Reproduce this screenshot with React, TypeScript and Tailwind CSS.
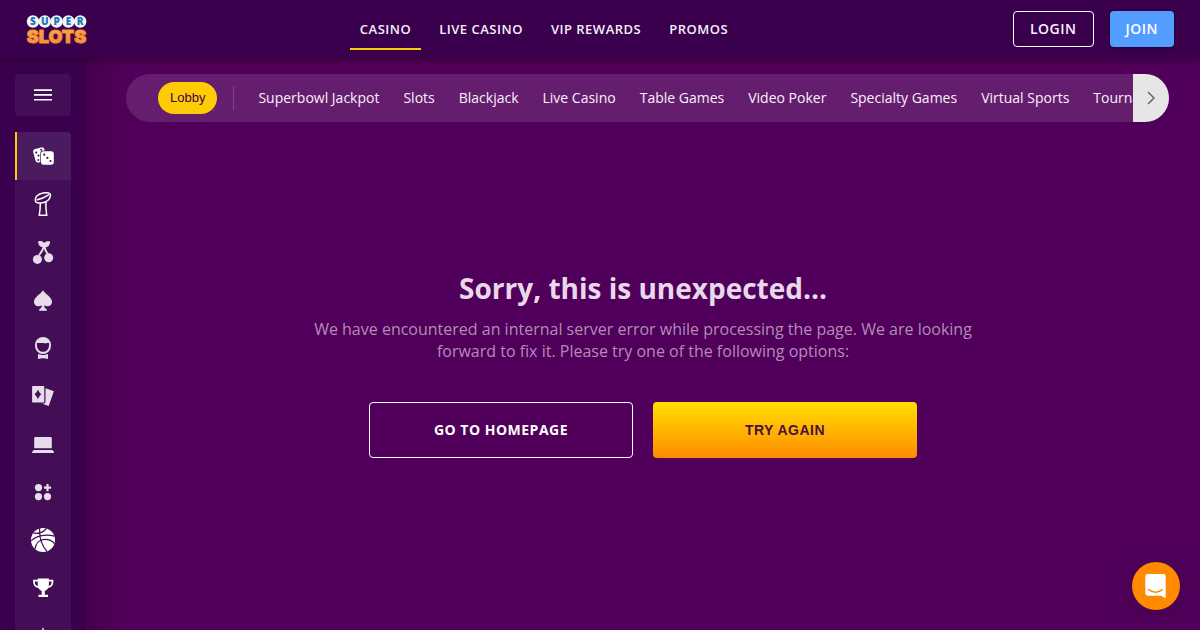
import type { ReactNode } from 'react';

const BG = '#430e55';

function Icon({ children }: { children: ReactNode }) {
  return (
    <svg viewBox="0 0 24 24" className="size-6" fill="currentColor" aria-hidden="true">
      {children}
    </svg>
  );
}

type SideItem = { label: string; icon: ReactNode; tone: string };

const sideItems: SideItem[] = [
  {
    label: 'Lobby',
    tone: 'text-white',
    icon: (
      <>
        <rect x="3.200" y="4" width="11.500" height="13.800" rx="2.600" transform="rotate(-15 9 11)" />
        <rect x="9.300" y="6.500" width="14" height="15" rx="3" fill="#4a1b5e" />
        <rect x="10" y="7.300" width="12.800" height="13.400" rx="2.600" />
        <g fill="#4a1b5e">
          <circle cx="5.200" cy="8.600" r="1.100" />
          <circle cx="10.200" cy="5.700" r="1" />
          <circle cx="7.500" cy="11.600" r="1.100" />
          <circle cx="7.300" cy="15.900" r="1" />
          <circle cx="13.200" cy="10.700" r="1.100" />
          <circle cx="16.400" cy="13.900" r="1.100" />
          <circle cx="19.500" cy="17" r="1.100" />
        </g>
      </>
    ),
  },
  {
    label: 'Superbowl Jackpot',
    tone: 'text-white',
    icon: (
      <g fill="none" stroke="currentColor" strokeWidth="1.5">
        <path d="M4.500 9.300C3.400 5.400 7.200 1.500 12.200 .9c3.600-.4 6.800-.2 7.200 1.600.5 4-3.400 7.800-8.100 8.300-3.200.4-6.200.300-6.800-1.500Z" />
        <path d="M5.600 7.900c4.200-.8 9-2.900 12.400-5.200" />
        <path d="M9.300 10.900c.1 4.500-.4 8.400-1 12.300h7.400c-.6-4-1-8.200-.8-13.400" />
      </g>
    ),
  },
  {
    label: 'Slots',
    tone: 'text-[#e7dce9]',
    icon: (
      <>
        <circle cx="6.400" cy="19.400" r="4.500" />
        <circle cx="17.700" cy="17.800" r="4.500" />
        <path d="M7.200 1.300c2.400-.5 4.700-.2 5.900 1.600 1.200-1.600 3.300-2 5.900-1.600.2 4.300-2.300 6.400-5.900 6.200-3.600.1-6-1.900-5.900-6.200Z" />
        <path d="M12.800 6.500c-.8 3.600-2.700 6-5 9M13.400 6.500c.5 2.900 1.400 5 3.600 8" fill="none" stroke="currentColor" strokeWidth="1.900" />
      </>
    ),
  },
  {
    label: 'Blackjack',
    tone: 'text-[#e7dce9]',
    icon: (
      <path d="M12 2.200c1.900 3.700 9 6.500 9 11.600 0 4.500-5.200 5.700-7.800 3.400.1 1.900.5 3.100 2.600 4.100v1.500H8.200v-1.500c2.100-1 2.500-2.200 2.600-4.100C8.200 19.500 3 18.300 3 13.800 3 8.700 10.100 5.900 12 2.200Z" />
    ),
  },
  {
    label: 'Live Casino',
    tone: 'text-[#e7dce9]',
    icon: (
      <>
        <path
          fillRule="evenodd"
          d="M12 .9a8.100 8.400 0 0 1 8.100 8.400 8.100 8.700 0 0 1-16.200 0A8.100 8.400 0 0 1 12 .9ZM5.900 7v2.300a6.100 6.500 0 0 0 12.200 0V7h-2.900l-1.100.8-.8-.8H5.900Z"
        />
        <path d="M7 18 11 19h2l4-1v5L13 22.200h-2L7 23v-5Z" />
      </>
    ),
  },
  {
    label: 'Table Games',
    tone: 'text-[#e7dce9]',
    icon: (
      <>
        <path d="M14 3.900 22.900 7.300 17.700 21.900 10 19.300Z" />
        <rect x=".5" y="1.500" width="13.400" height="17.600" rx="1.500" stroke={BG} strokeWidth="1.200" />
        <path d="M6.900 5.400c.8 2 1.900 3.500 3.400 4.900-1.500 1.500-2.600 2.900-3.400 5-.8-2.100-1.900-3.500-3.400-5 1.500-1.400 2.600-2.900 3.400-4.900Z" fill={BG} />
      </>
    ),
  },
  {
    label: 'Video Poker',
    tone: 'text-[#e7dce9]',
    icon: (
      <>
        <path d="M4.200 5h15.600a1 1 0 0 1 1 1v10.200H3.200V6a1 1 0 0 1 1-1Z" />
        <path d="M2.700 17.900h18.700l1.600 2.200v.9H1.100v-.9Z" />
      </>
    ),
  },
  {
    label: 'Specialty Games',
    tone: 'text-[#e7dce9]',
    icon: (
      <>
        <circle cx="7.500" cy="7.600" r="3.600" />
        <circle cx="7.500" cy="16.600" r="3.600" />
        <circle cx="16.500" cy="16.600" r="3.600" />
        <path d="M16.500 4v7.200M12.900 7.600h7.200" stroke="currentColor" strokeWidth="2.200" />
      </>
    ),
  },
  {
    label: 'Virtual Sports',
    tone: 'text-white',
    icon: (
      <>
        <circle cx="12" cy="12" r="12" />
        <g fill="none" stroke={BG} strokeWidth="1.200">
          <path d="M8.700 0c-.6 8 1.300 16.500 7.300 23.500M2.100 4.900C6.500 5.900 12 4.600 15.400 .5M.2 12.800C4 8.500 14 5.400 23.600 8.200M3.900 21C5 15 9 11.500 13.500 11.400c4.500-.1 7.900 1.400 9.900 4.200" />
        </g>
      </>
    ),
  },
  {
    label: 'Tournaments',
    tone: 'text-white',
    icon: (
      <>
        <path d="M6.700 2.400h11.200v6c0 3.600-1.700 5.600-4.100 6.500v3.900H17v2.300H7.500v-2.300h3.200v-3.900c-2.400-.9-4-2.900-4-6.500Z" />
        <path d="M7 4.600H3c-.3 3.600 1 6.300 4.700 6.500M17.500 4.600h4c.3 3.600-1 6.300-4.700 6.500" fill="none" stroke="currentColor" strokeWidth="1.800" />
      </>
    ),
  },
  {
    label: 'Promotions',
    tone: 'text-[#e7dce9]',
    icon: <path d="m12 3 2.400 6.300 6.600.4-5.100 4.300 1.700 6.500L12 16.900l-5.600 3.600L8.100 14 3 9.700l6.600-.4Z" />,
  },
];

const mainLinks = ['CASINO', 'LIVE CASINO', 'VIP REWARDS', 'PROMOS'];

const categories = [
  'Superbowl Jackpot',
  'Slots',
  'Blackjack',
  'Live Casino',
  'Table Games',
  'Video Poker',
  'Specialty Games',
  'Virtual Sports',
  'Tournaments',
];

function Logo() {
  return (
    <svg viewBox="0 0 64 32" className="h-8 w-16" role="img" aria-label="Super Slots">
      <defs>
        <linearGradient id="slots" x1="0" y1="0" x2="0" y2="1">
          <stop offset="0" stopColor="#ffab4a" />
          <stop offset="1" stopColor="#f98b35" />
        </linearGradient>
      </defs>
      <g fill="#f1f5fa">
        <circle cx="8" cy="8.500" r="6.200" />
        <circle cx="19.800" cy="8.500" r="6.200" />
        <circle cx="31.600" cy="8.500" r="6.200" />
        <circle cx="43.400" cy="8.500" r="6.200" />
        <circle cx="55.200" cy="8.500" r="6.200" />
      </g>
      <text
        x="8 19.8 31.6 43.4 55.2"
        y="12"
        textAnchor="middle"
        fontFamily="Open Sans, sans-serif"
        fontWeight="800"
        fontSize="10"
        fill="#1976b8"
      >
        SUPER
      </text>
      <text
        x="31.5"
        y="30.200"
        textAnchor="middle"
        fontFamily="Inter, sans-serif"
        fontWeight="900"
        fontSize="18"
        fill="url(#slots)"
        stroke="#f7913a"
        strokeWidth="1"
        strokeLinejoin="round"
      >
        SLOTS
      </text>
    </svg>
  );
}

function Header() {
  return (
    <header className="relative z-20 flex h-[58px] shrink-0 items-center justify-between bg-[#3a004d] pr-[26px] pl-[25px] shadow-[0_2px_8px_rgba(40,0,30,0.6)]">
      <a href="#home">
        <Logo />
      </a>
      <nav aria-label="Main" className="mr-3.5 flex gap-2 self-stretch pb-2">
        {mainLinks.map((label, i) => (
          <a
            key={label}
            href="#section"
            className={`flex items-center border-b-2 px-2.5 pt-3 text-[13px] font-semibold tracking-[0.5px] whitespace-nowrap text-[#f5f0f7] ${
              i === 0 ? 'border-[#ffcb05]' : 'border-transparent'
            }`}
          >
            {label}
          </a>
        ))}
      </nav>
      <div className="flex gap-4">
        <button type="button" className="h-9 rounded border border-white px-4 text-sm font-semibold tracking-[0.5px] text-[#f8f4fa]">
          LOGIN
        </button>
        <button
          type="button"
          className="h-9 rounded bg-[#529dff] px-4 text-sm font-semibold tracking-[0.5px] text-white shadow-[0_1px_5px_rgba(0,0,0,0.4)]"
        >
          JOIN
        </button>
      </div>
    </header>
  );
}

function Sidebar() {
  return (
    <aside className="flex w-[86px] shrink-0 flex-col gap-4 overflow-hidden bg-[#3a004d] pt-4 pl-[15px]">
      <button
        type="button"
        aria-label="Menu"
        className="flex h-[42px] w-14 shrink-0 items-center justify-center rounded bg-[#430e55] text-white"
      >
        <svg viewBox="0 0 18 12" className="h-3 w-[18px]" fill="currentColor" aria-hidden="true">
          <path d="M0 .2h18v1.800H0ZM0 5h18v1.700H0ZM0 9.900h18v1.700H0Z" />
        </svg>
      </button>
      <nav aria-label="Games" className="w-14 overflow-hidden rounded-tr bg-[#430e55]">
        {sideItems.map((item, i) => (
          <a
            key={item.label}
            href="#games"
            aria-label={item.label}
            className={`flex h-12 items-center justify-center ${item.tone} ${
              i === 0 ? 'bg-[#4a1b5e] shadow-[inset_2px_0_#ffcb05]' : ''
            }`}
          >
            <Icon>{item.icon}</Icon>
          </a>
        ))}
      </nav>
    </aside>
  );
}

function CategoryBar() {
  return (
    <div className="flex h-12 overflow-hidden rounded-full bg-[#651e6e]">
      <div className="flex min-w-0 flex-1 items-center overflow-hidden pl-8">
        <button
          type="button"
          className="h-8 shrink-0 rounded-full bg-[#ffcb05] px-3 font-['Liberation_Sans',sans-serif] text-[13px] text-[#3a004d]"
        >
          Lobby
        </button>
        <span className="mr-6 ml-4 h-6 w-px shrink-0 bg-[#80468a]" />
        <div className="flex gap-6 text-sm whitespace-nowrap text-[#f8f2f9]">
          {categories.map((c) => (
            <a key={c} href="#category">
              {c}
            </a>
          ))}
        </div>
      </div>
      <button type="button" aria-label="Next" className="flex w-9 shrink-0 items-center justify-center bg-[#e6e6e6]">
        <svg viewBox="0 0 8 14" className="h-3.5 w-2" fill="none" stroke="#666" strokeWidth="1.500" aria-hidden="true">
          <path d="m1 1 6 6-6 6" />
        </svg>
      </button>
    </div>
  );
}

export default function App() {
  return (
    <div className="flex h-screen flex-col overflow-hidden bg-[#50005a] font-['Open_Sans',sans-serif]">
      <Header />
      <div className="flex min-h-0 flex-1">
        <Sidebar />
        <main className="min-w-0 flex-1 bg-linear-to-r from-[#47004b] to-[#50005a] to-[40px] pt-4">
          <div className="pr-[31px] pl-10">
            <CategoryBar />
          </div>
          <section className="flex flex-col items-center px-6 pt-[146px] text-center">
            <h1 className="text-[28px] leading-10 font-bold text-[#e8d9ea]">Sorry, this is unexpected...</h1>
            <p className="mt-2.5 max-w-[680px] text-base leading-[22px] text-[#b48bb8]">
              We have encountered an internal server error while processing the page. We are looking forward to fix it.
              Please try one of the following options:
            </p>
            <div className="mt-10 flex gap-5">
              <a
                href="#home"
                className="flex h-14 w-[264px] items-center justify-center rounded border border-white text-sm font-bold tracking-[0.5px] text-white"
              >
                GO TO HOMEPAGE
              </a>
              <button
                type="button"
                className="h-14 w-[264px] rounded bg-linear-to-b from-[#ffdf00] to-[#ff8a00] font-['Liberation_Sans',sans-serif] text-sm font-bold tracking-[0.5px] text-[#4a0f3d]"
              >
                TRY AGAIN
              </button>
            </div>
          </section>
        </main>
      </div>
      <button
        type="button"
        aria-label="Open chat"
        className="fixed right-5 bottom-5 z-30 flex size-12 items-center justify-center rounded-full bg-[#ff8a00] shadow-[0_2px_24px_rgba(0,0,0,0.15)]"
      >
        <svg viewBox="0 0 24 26" className="h-[26px] w-6" aria-hidden="true">
          <path d="M3.700 1h15.600a2.400 2.400 0 0 1 2.400 2.400V25c-1.600-.4-3.200-1.200-4.400-2.300H3.700a2.400 2.400 0 0 1-2.400-2.400V3.400A2.400 2.400 0 0 1 3.700 1Z" fill="#fff" />
          <path d="M4.500 16.600c4.400 3.200 9.700 3.200 14 0" fill="none" stroke="#ff8a00" strokeWidth="1.400" strokeLinecap="round" />
        </svg>
      </button>
    </div>
  );
}
